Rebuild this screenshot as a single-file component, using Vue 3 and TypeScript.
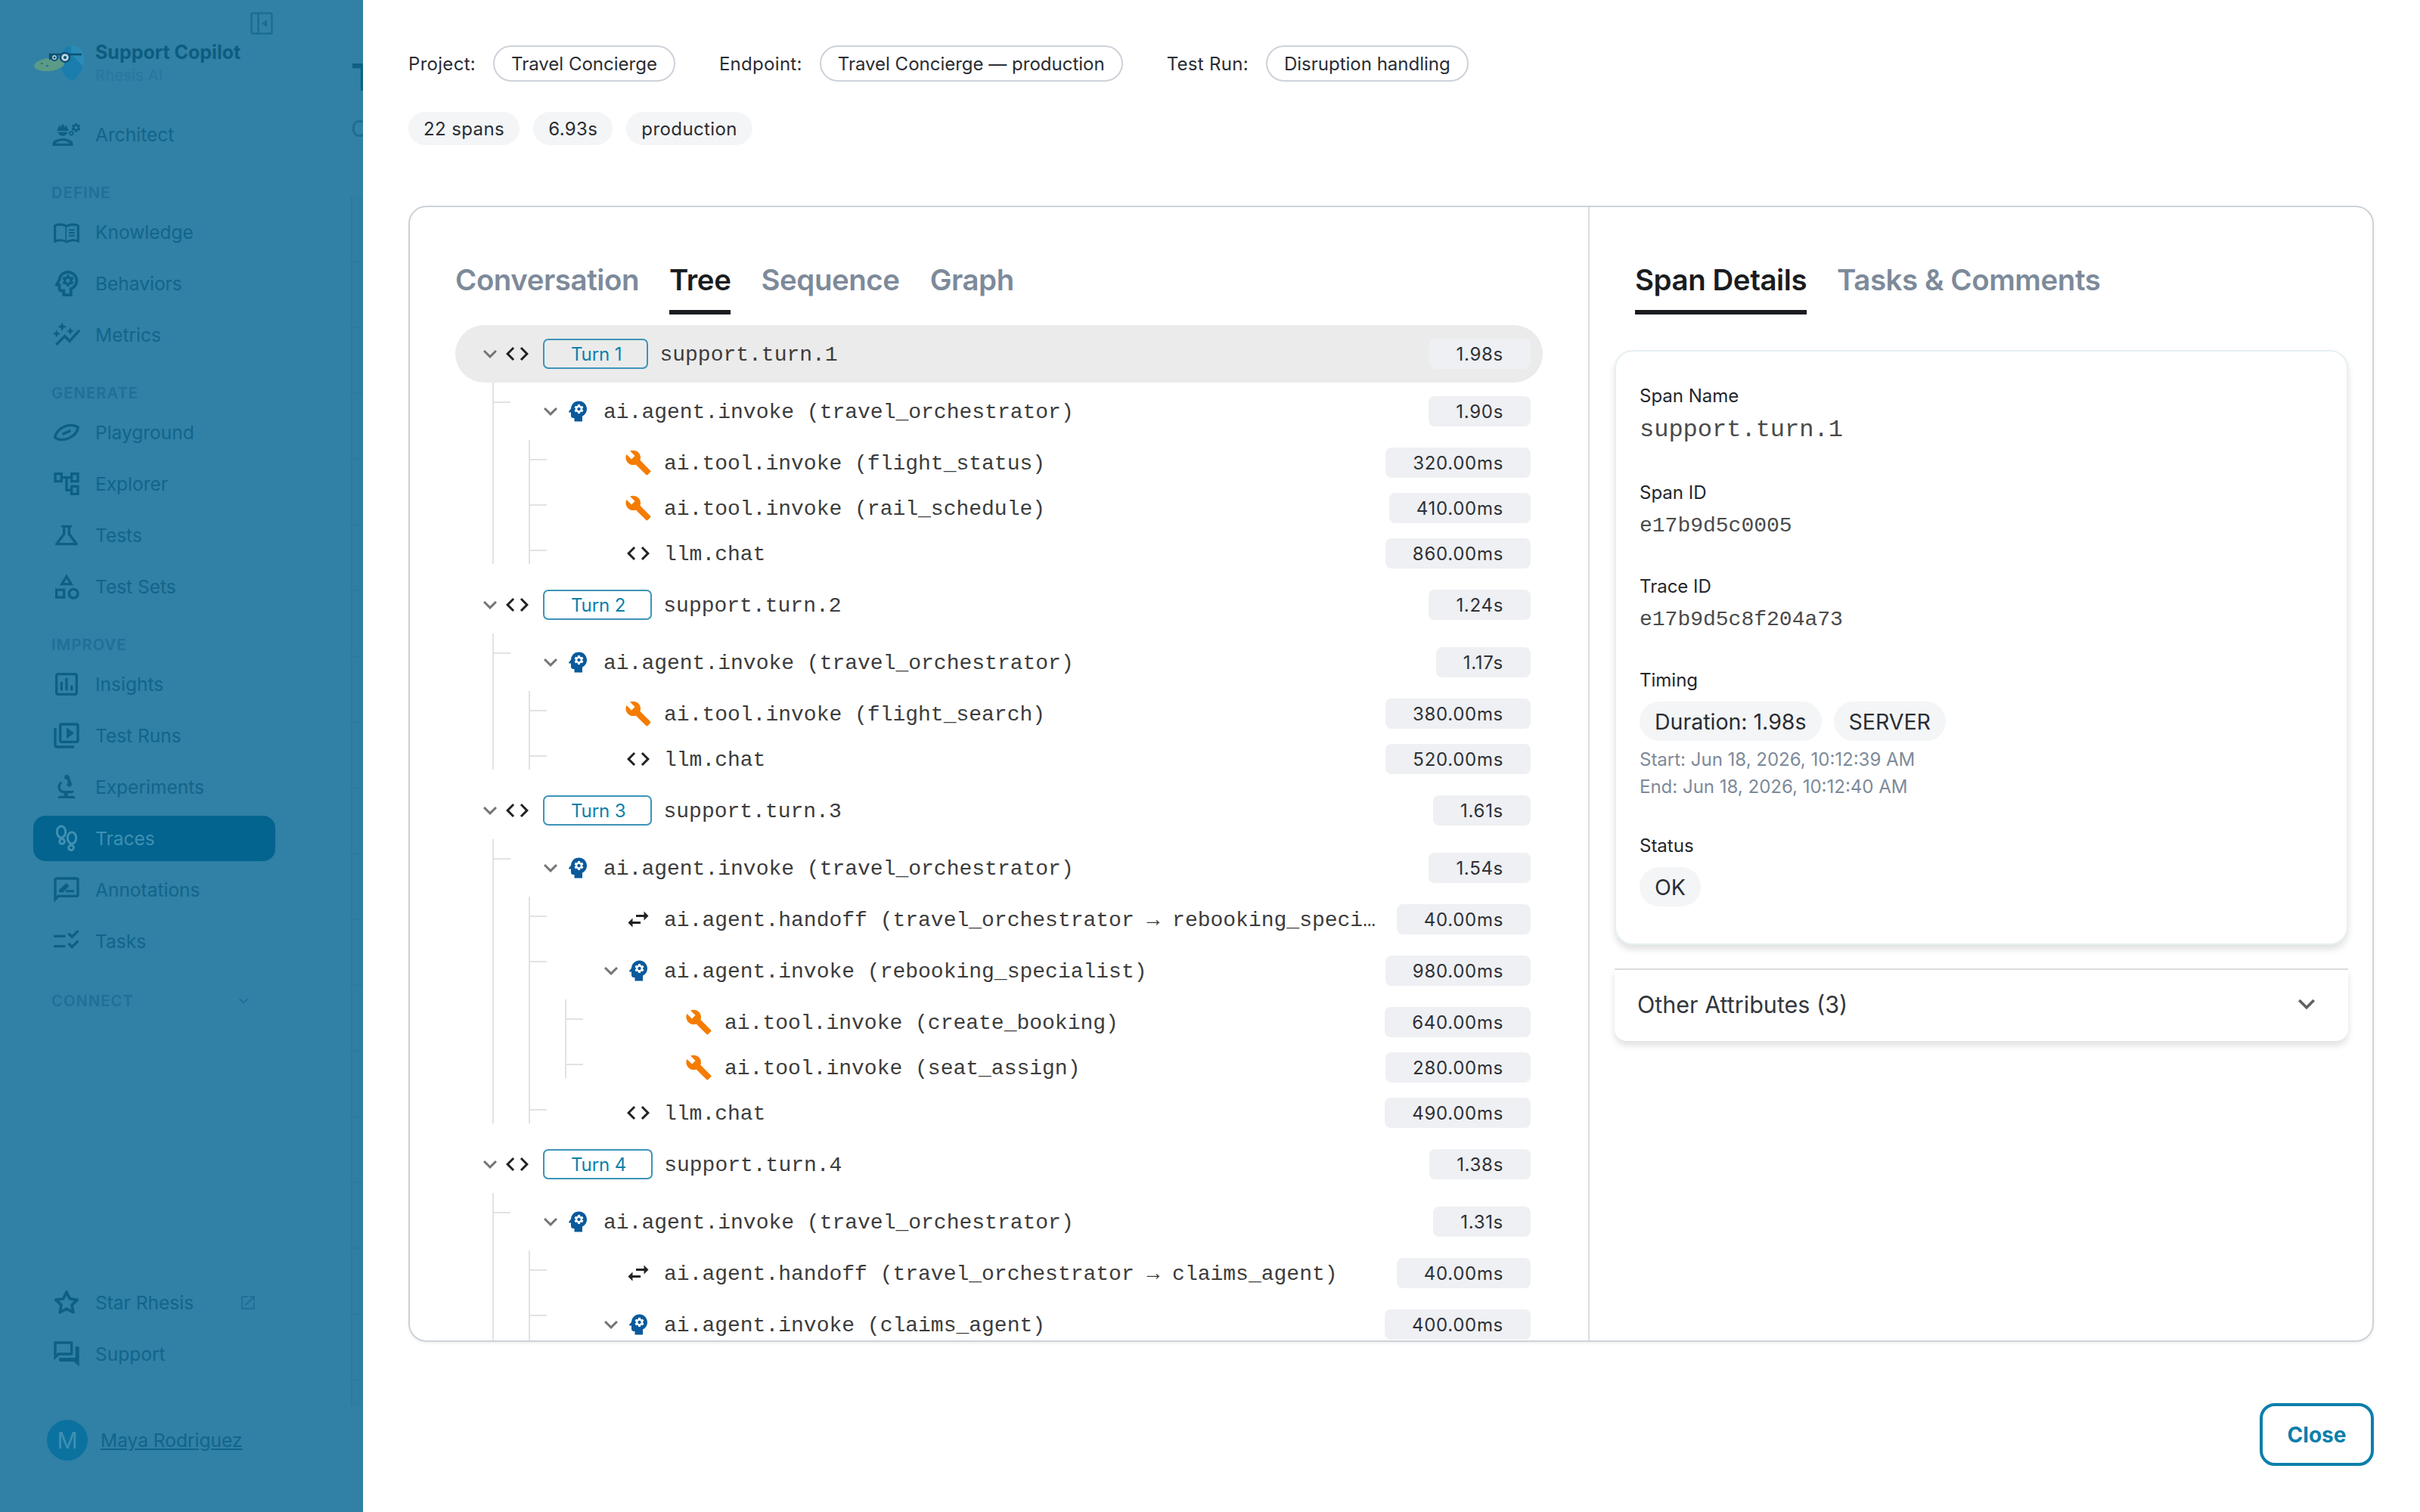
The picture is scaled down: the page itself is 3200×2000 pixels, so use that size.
<template>
  <div class="app">
    <aside class="sidebar">
      <button class="collapse">
        <svg viewBox="0 0 30 30" width="30" height="30" fill="none">
          <rect x="1.5" y="1.5" width="27" height="27" rx="2" stroke="currentColor" stroke-width="2.5" />
          <path d="M10.5 2v26" stroke="currentColor" stroke-width="2.5" />
          <path d="M22 10v10l-7-5z" fill="currentColor" />
        </svg>
      </button>

      <div class="brand">
        <svg class="logo" viewBox="0 0 70 50" width="70" height="50">
          <path d="M48 2C58 0 66 6 67 15C68 29 60 43 52 48C42 44 34 32 35 22C36 11 40 4 48 2Z" fill="#1a7dae" />
          <path d="M50 2C58 0 66 6 67 15C68 20 67 25 66 29L50 12Z" fill="#2a8bb4" />
          <ellipse cx="21" cy="26.5" rx="20" ry="8.5" transform="rotate(-6 21 26.5)" fill="#5b9a87" />
          <path d="M10 25h2.5M17 28h3" stroke="#155f7f" stroke-width="1.6" />
          <path d="M22 20v-7h42M22 13h19" stroke="#0d4f72" stroke-width="2.4" fill="none" />
          <circle cx="28" cy="17" r="4" fill="#bcd5df" stroke="#0d4f72" stroke-width="2.2" />
          <circle cx="42" cy="17" r="6" fill="#bcd5df" stroke="#0d4f72" stroke-width="2.4" />
          <circle cx="42" cy="17" r="2" fill="#0d4f72" />
          <circle cx="28" cy="17" r="1.6" fill="#0d4f72" />
        </svg>
        <div>
          <div class="brand-title">Support Copilot</div>
          <div class="brand-sub">Rhesis AI</div>
        </div>
      </div>

      <nav class="nav">
        <template v-for="entry in nav" :key="entry.label">
          <div v-if="entry.section" class="section">
            {{ entry.label }}
            <svg v-if="entry.label === 'CONNECT'" viewBox="0 0 24 24" width="24" height="24" fill="currentColor"><path d="M16.59 8.59 12 13.17 7.41 8.59 6 10l6 6 6-6z" /></svg>
          </div>
          <a v-else :class="['item', { active: entry.label === 'Traces' }]">
            <svg viewBox="0 0 24 24" width="40" height="40" fill="currentColor" v-html="icons[entry.icon!]"></svg>
            <span>{{ entry.label }}</span>
          </a>
        </template>
      </nav>

      <div class="bottom">
        <a class="item">
          <svg viewBox="0 0 24 24" width="40" height="40" fill="currentColor" v-html="icons.star"></svg>
          <span>Star Rhesis</span>
          <svg class="external" viewBox="0 0 24 24" width="24" height="24" fill="currentColor"><path d="M19 19H5V5h7V3H5c-1.11 0-2 .9-2 2v14c0 1.1.89 2 2 2h14c1.1 0 2-.9 2-2v-7h-2v7zM14 3v2h3.59l-9.83 9.83 1.41 1.41L19 6.41V10h2V3h-7z" /></svg>
        </a>
        <a class="item">
          <svg viewBox="0 0 24 24" width="40" height="40" fill="currentColor" v-html="icons.forum"></svg>
          <span>Support</span>
        </a>
        <div class="user">
          <span class="avatar">M</span>
          <span class="user-name">Maya Rodriguez</span>
        </div>
      </div>
    </aside>

    <div class="behind">
      <div class="behind-title">T</div>
      <div class="behind-sub">C</div>
      <div class="behind-card"></div>
    </div>

    <main class="modal">
      <div class="meta">
        <template v-for="m in meta" :key="m.label">
          <span class="meta-label">{{ m.label }}</span>
          <span class="meta-chip">{{ m.value }}</span>
        </template>
      </div>
      <div class="stats">
        <span v-for="s in stats" :key="s" class="stat">{{ s }}</span>
      </div>

      <section class="panel">
        <div class="left">
          <div class="tabs">
            <span v-for="t in leftTabs" :key="t" :class="['tab', { on: t === 'Tree' }]">{{ t }}</span>
          </div>
          <div class="tree">
            <div
              v-for="(row, i) in rows"
              :key="i"
              :class="['row', { parent: row.hasChildren, selected: i === 0 }]"
              :style="{ paddingLeft: 28 + row.depth * 80 + 'px' }"
            >
              <template v-for="g in row.guides" :key="g.level">
                <i class="guide" :class="{ short: g.short }" :style="{ left: 1 + g.level * 48 + 'px' }"></i>
              </template>
              <i v-if="row.depth > 0" class="stub" :style="{ left: 1 + row.depth * 48 + 'px' }"></i>

              <span class="twist">
                <svg v-if="row.hasChildren" viewBox="0 0 24 24" width="36" height="36" fill="#757575"><path d="M16.59 8.59 12 13.17 7.41 8.59 6 10l6 6 6-6z" /></svg>
              </span>
              <span class="kind" :class="row.kind">
                <svg viewBox="0 0 24 24" width="36" height="36" fill="currentColor" v-html="kindIcons[row.kind]"></svg>
              </span>
              <span v-if="row.turn" class="turn-badge">Turn {{ row.turn }}</span>
              <span class="label">{{ row.label }}</span>
              <span class="dur">{{ row.dur }}</span>
            </div>
          </div>
        </div>

        <div class="right">
          <div class="tabs right-tabs">
            <span class="tab on">Span Details</span>
            <span class="tab">Tasks &amp; Comments</span>
          </div>
          <div class="card">
            <div class="field">
              <div class="f-label">Span Name</div>
              <div class="f-name">support.turn.1</div>
            </div>
            <div class="field">
              <div class="f-label">Span ID</div>
              <div class="f-mono">e17b9d5c0005</div>
            </div>
            <div class="field">
              <div class="f-label">Trace ID</div>
              <div class="f-mono">e17b9d5c8f204a73</div>
            </div>
            <div class="field">
              <div class="f-label">Timing</div>
              <div class="chips">
                <span class="chip">Duration: 1.98s</span>
                <span class="chip">SERVER</span>
              </div>
              <div class="times">
                <div>Start: Jun 18, 2026, 10:12:39 AM</div>
                <div>End: Jun 18, 2026, 10:12:40 AM</div>
              </div>
            </div>
            <div class="field last">
              <div class="f-label">Status</div>
              <div class="chips"><span class="chip">OK</span></div>
            </div>
          </div>
          <div class="attrs">
            <span>Other Attributes (3)</span>
            <svg viewBox="0 0 24 24" width="44" height="44" fill="#616161"><path d="M16.59 8.59 12 13.17 7.41 8.59 6 10l6 6 6-6z" /></svg>
          </div>
        </div>
      </section>

      <footer class="foot">
        <button class="close">Close</button>
      </footer>
    </main>
  </div>
</template>

<script setup lang="ts">
type Kind = 'turn' | 'agent' | 'tool' | 'llm' | 'handoff'

interface SpanNode {
  label: string
  dur: string
  kind: Kind
  turn?: number
  children?: SpanNode[]
}

interface Guide {
  level: number
  short: boolean
}

interface Row extends SpanNode {
  depth: number
  hasChildren: boolean
  guides: Guide[]
}

interface NavEntry {
  label: string
  icon?: string
  section?: boolean
}

const codePath = 'M9.4 16.6 4.8 12l4.6-4.6L8 6l-6 6 6 6 1.4-1.4zm5.2 0 4.6-4.6-4.6-4.6L16 6l6 6-6 6-1.4-1.4z'

const kindIcons: Record<Kind, string> = {
  turn: `<path d="${codePath}"/>`,
  llm: `<path d="${codePath}"/>`,
  agent:
    '<path d="M13 3C9.25 3 6.2 5.94 6.02 9.64L4.1 12.2c-.25.33-.01.8.4.8H6v3c0 1.1.9 2 2 2h1v3h7v-4.68c2.36-1.12 4-3.53 4-6.32 0-3.87-3.13-7-7-7zm3 7c0 .13-.01.26-.02.39l.83.66c.08.06.1.16.05.25l-.8 1.39c-.05.09-.16.12-.24.09l-.99-.4c-.21.16-.43.29-.67.39L14 13.83c-.01.1-.1.17-.2.17h-1.6c-.1 0-.18-.07-.2-.17l-.15-1.06c-.25-.1-.47-.23-.68-.39l-.99.4c-.09.03-.2 0-.25-.09l-.8-1.39c-.05-.08-.03-.19.05-.25l.84-.66c-.01-.13-.02-.26-.02-.39s.02-.27.04-.39l-.85-.66c-.08-.06-.1-.16-.05-.26l.8-1.38c.05-.09.15-.12.24-.09l1 .4c.2-.15.43-.29.67-.39L12 6.17c.02-.1.1-.17.2-.17h1.6c.1 0 .18.07.2.17l.15 1.06c.24.1.46.23.67.39l1-.4c.09-.03.2 0 .24.09l.8 1.38c.05.09.03.2-.05.26l-.85.66c.03.12.04.25.04.39z"/><path d="M13 8.57c-.79 0-1.43.64-1.43 1.43s.64 1.43 1.43 1.43 1.43-.64 1.43-1.43-.64-1.43-1.43-1.43z"/>',
  tool:
    '<path d="M22.7 19l-9.1-9.1c.9-2.3.4-5-1.5-6.9-2-2-5-2.4-7.4-1.3L9 6 6 9 1.6 4.7C.4 7.1.9 10.1 2.9 12.1c1.9 1.9 4.6 2.4 6.9 1.5l9.1 9.1c.4.4 1 .4 1.4 0l2.3-2.3c.5-.4.5-1.1.1-1.4z"/>',
  handoff: '<path d="M6.99 11 3 15l3.99 4v-3H14v-2H6.99v-3zM21 9l-3.99-4v3H10v2h7.01v3L21 9z"/>'
}

const icons: Record<string, string> = {
  architect:
    '<path d="M9 15c-2.67 0-8 1.34-8 4v2h16v-2c0-2.66-5.33-4-8-4zm-5.5 4c.4-.9 3.3-2 5.5-2s5.1 1.1 5.5 2z"/><path d="M22.1 6.84c.01-.11.02-.22.02-.34s-.01-.23-.03-.34l.74-.58c.07-.05.08-.15.04-.22l-.7-1.21c-.04-.08-.14-.1-.21-.08l-.86.35c-.18-.14-.38-.25-.59-.34l-.13-.93c-.02-.09-.09-.15-.18-.15h-1.4c-.09 0-.16.06-.17.15l-.13.93c-.21.09-.41.21-.59.34l-.87-.35c-.08-.03-.17 0-.21.08l-.7 1.21c-.04.08-.03.17.04.22l.74.58c-.02.11-.03.23-.03.34s.01.23.03.34l-.74.58c-.07.05-.08.15-.04.22l.7 1.21c.04.08.14.1.21.08l.87-.35c.18.14.38.25.59.34l.13.93c.01.09.08.15.17.15h1.4c.09 0 .16-.06.17-.15l.13-.93c.21-.09.41-.21.59-.34l.87.35c.08.03.17 0 .21-.08l.7-1.21c.04-.08.03-.17-.04-.22zm-2.6.91c-.69 0-1.25-.56-1.25-1.25s.56-1.25 1.25-1.25 1.25.56 1.25 1.25-.56 1.25-1.25 1.25z"/><path d="M17.4 11.2c.01-.07.01-.14.01-.2s0-.13-.02-.2l.5-.38-.5-.86-.58.23c-.12-.09-.25-.17-.39-.23l-.09-.62h-1l-.09.62c-.14.06-.27.14-.39.23l-.58-.23-.5.86.5.38c-.01.07-.02.14-.02.2s.01.13.02.2l-.5.38.5.86.58-.23c.12.09.25.17.39.23l.09.62h1l.09-.62c.14-.06.27-.14.39-.23l.58.23.5-.86zm-1.6.6c-.44 0-.8-.36-.8-.8s.36-.8.8-.8.8.36.8.8-.36.8-.8.8z"/><path d="M4.74 9h8.53c.27 0 .49-.22.49-.49v-.02c0-.27-.22-.49-.49-.49H13c0-1.48-.81-2.75-2-3.45v.95c0 .28-.22.5-.5.5s-.5-.22-.5-.5V4.14C9.68 4.06 9.35 4 9 4s-.68.06-1 .14V5.5c0 .28-.22.5-.5.5S7 5.78 7 5.5v-.95C5.81 5.25 5 6.52 5 8h-.26c-.27 0-.49.22-.49.49v.03c0 .26.22.48.49.48zM9 13c1.86 0 3.41-1.28 3.86-3H5.14c.45 1.72 2 3 3.86 3z"/>',
  book:
    '<g transform="translate(12 12) scale(.92) translate(-12 -12)"><path d="M21 5c-1.11-.35-2.33-.5-3.5-.5-1.95 0-4.05.4-5.5 1.5-1.45-1.1-3.55-1.5-5.5-1.5S2.45 4.9 1 6v14.65c0 .25.25.5.5.5.1 0 .15-.05.25-.05C3.1 20.45 5.05 20 6.5 20c1.95 0 4.05.4 5.5 1.5 1.35-.85 3.8-1.5 5.5-1.5 1.65 0 3.35.3 4.75 1.05.1.05.15.05.25.05.25 0 .5-.25.5-.5V6c-.6-.45-1.25-.75-2-1zM3 18.5V7c1.1-.35 2.3-.5 3.5-.5 1.34 0 3.13.41 4.5 1v11.5c-1.37-.59-3.16-1-4.5-1-1.2 0-2.4.15-3.5.5zm18 0c-1.1-.35-2.3-.5-3.5-.5-1.7 0-4.15.65-5.5 1.5V8c1.35-.85 3.8-1.5 5.5-1.5 1.2 0 2.4.15 3.5.5z"/><path d="M14 9.5h5v1.3h-5zM14 12h5v1.3h-5zM14 14.5h5v1.3h-5z"/></g>',
  behavior:
    '<g transform="translate(12 12) scale(1.14) translate(-12 -12)"><path d="M15.82 7.22l-1 .4c-.21-.16-.43-.29-.67-.39L14 6.17c-.02-.1-.1-.17-.2-.17h-1.6c-.1 0-.18.07-.19.17l-.15 1.06c-.24.1-.47.23-.67.39l-1-.4c-.09-.03-.2 0-.24.09l-.8 1.38c-.05.09-.03.2.05.26l.85.66c-.03.12-.05.26-.05.39s.01.26.03.39l-.84.66c-.08.06-.1.17-.05.25l.8 1.39c.05.09.15.12.25.09l.99-.4c.21.16.43.29.68.39l.14 1.06c.02.1.1.17.2.17h1.6c.1 0 .18-.07.2-.17l.15-1.06c.24-.1.47-.23.67-.39l.99.4c.09.04.2 0 .24-.09l.8-1.39c.05-.09.03-.19-.05-.25l-.83-.66c.02-.13.02-.26.02-.39 0-.14-.01-.27-.03-.39l.85-.66c.08-.06.1-.17.05-.26l-.8-1.38c-.05-.09-.16-.12-.25-.09zM13 11.43c-.79 0-1.43-.64-1.43-1.43s.64-1.43 1.43-1.43 1.43.64 1.43 1.43-.64 1.43-1.43 1.43z"/><path d="M19.94 9.06c-.43-3.27-3.23-5.86-6.53-6.05C13.27 3 13.14 3 13 3 9.47 3 6.57 5.61 6.08 9l-1.93 3.48c-.41.66.07 1.52.85 1.52h1v2c0 1.1.9 2 2 2h1v3h7v-4.68c2.62-1.25 4.35-4.08 3.94-7.26zM14.89 14.63 14 15.05V19h-3v-3H8v-4H6.7l1.33-2.33C8.21 7.06 10.35 5 13 5c2.76 0 5 2.24 5 5 0 2.09-1.29 3.88-3.11 4.63z"/></g>',
  metrics:
    '<path d="M14.06 9.94 12 9l2.06-.94L15 6l.94 2.06L18 9l-2.06.94L15 12l-.94-2.06zM4 14l.94-2.06L7 11l-2.06-.94L4 8l-.94 2.06L1 11l2.06.94L4 14zm4.5-5 1.09-2.41L12 5.5 9.59 4.41 8.5 2 7.41 4.41 5 5.5l2.41 1.09L8.5 9zm-4 11.5 6-6.01 4 4L23 8.93l-1.41-1.41-7.09 7.97-4-4L3 19l1.5 1.5z"/>',
  football:
    '<g transform="rotate(-24 12 12)" fill="none" stroke="currentColor" stroke-width="2"><path d="M2 12C6 5.5 18 5.5 22 12C18 18.5 6 18.5 2 12Z"/><path d="M8.5 12h7"/></g>',
  tree: '<path d="M22 11V3h-7v3H9V3H2v8h7V8h2v10h4v3h7v-8h-7v3h-2V8h2v3h7zM7 9H4V5h3v4zm10 6h3v4h-3v-4zm0-10h3v4h-3V5z"/>',
  flask:
    '<path d="M13 11.33 18 18H6l5-6.67V6h2m2.96-2H8.04c-.42 0-.65.48-.39.81L9 6.5v4.17L3.2 18.4c-.49.66-.02 1.6.8 1.6h16c.82 0 1.29-.94.8-1.6L15 10.67V6.5l1.35-1.69c.26-.33.03-.81-.39-.81z"/>',
  category:
    '<path d="M12 2l-5.5 9h11L12 2zm0 3.84L13.93 9h-3.87L12 5.84zM17.5 13c-2.49 0-4.5 2.01-4.5 4.5s2.01 4.5 4.5 4.5 4.5-2.01 4.5-4.5-2.01-4.5-4.5-4.5zm0 7c-1.38 0-2.5-1.12-2.5-2.5s1.12-2.5 2.5-2.5 2.5 1.12 2.5 2.5-1.12 2.5-2.5 2.5zM3 21.5h8v-8H3v8zm2-6h4v4H5v-4z"/>',
  chart:
    '<path d="M19 3H5c-1.1 0-2 .9-2 2v14c0 1.1.9 2 2 2h14c1.1 0 2-.9 2-2V5c0-1.1-.9-2-2-2zm0 16H5V5h14v14zM7 10h2v7H7zm4-3h2v10h-2zm4 6h2v4h-2z"/>',
  play:
    '<path d="M4 6H2v14c0 1.1.9 2 2 2h14v-2H4V6zm16-4H8c-1.1 0-2 .9-2 2v12c0 1.1.9 2 2 2h12c1.1 0 2-.9 2-2V4c0-1.1-.9-2-2-2zm0 14H8V4h12v12zM12 5.5v9l6-4.5z"/>',
  biotech:
    '<path d="M7 19c-1.1 0-2 .9-2 2h14c0-1.1-.9-2-2-2h-4v-2h3c1.1 0 2-.9 2-2h-8c-1.66 0-3-1.34-3-3 0-1.09.59-2.04 1.46-2.56C8.17 9.03 8 8.54 8 8c0-.21.04-.42.09-.62C6.28 8.13 5 9.92 5 12c0 2.76 2.24 5 5 5v2H7z"/><path d="M10.56 5.51C11.91 5.54 13 6.64 13 8c0 .75-.33 1.41-.85 1.87l.59 1.62.94-.34.34.94 1.88-.68-.34-.94.94-.34-2.74-7.52-.94.34-.34-.94-1.88.68.34.94-.94.35.56 1.53z"/>',
  steps:
    '<g fill="none" stroke="currentColor" stroke-width="1.8"><ellipse cx="7.8" cy="6.8" rx="3.4" ry="4.6"/><circle cx="8.4" cy="14.4" r="2"/><ellipse cx="16.2" cy="11.6" rx="3.4" ry="4.6"/><circle cx="15.6" cy="19.4" r="2"/></g>',
  note:
    '<path d="M20 2H4c-1.1 0-2 .9-2 2v18l4-4h14c1.1 0 2-.9 2-2V4c0-1.1-.9-2-2-2zm0 14H5.17L4 17.17V4h16v12z"/><path d="M6 14h3.2l4.8-5-2.2-2.2L6 12zM11.5 14H18v-1.8h-6.5z"/>',
  tasks:
    '<path d="M11 7H2v2h9V7zm0 8H2v2h9v-2zm5.34 3L12.8 14.46l1.41-1.41 2.12 2.12 4.24-4.24 1.41 1.41L16.34 18zm0-8L12.8 6.46l1.41-1.41 2.12 2.12 4.24-4.24 1.41 1.41L16.34 10z"/>',
  star:
    '<path d="M12 3.6 14.6 9l5.9.8-4.3 4.1 1.1 5.9-5.3-2.9-5.3 2.9 1.1-5.9-4.3-4.1 5.9-.8z" fill="none" stroke="currentColor" stroke-width="2.2" stroke-linejoin="round"/>',
  forum:
    '<path d="M15 4v7H5.17L4 12.17V4h11m1-2H3c-.55 0-1 .45-1 1v14l4-4h10c.55 0 1-.45 1-1V3c0-.55-.45-1-1-1zm5 4h-2v9H6v2c0 .55.45 1 1 1h11l4 4V7c0-.55-.45-1-1-1z"/>'
}

const nav: NavEntry[] = [
  { label: 'Architect', icon: 'architect' },
  { label: 'DEFINE', section: true },
  { label: 'Knowledge', icon: 'book' },
  { label: 'Behaviors', icon: 'behavior' },
  { label: 'Metrics', icon: 'metrics' },
  { label: 'GENERATE', section: true },
  { label: 'Playground', icon: 'football' },
  { label: 'Explorer', icon: 'tree' },
  { label: 'Tests', icon: 'flask' },
  { label: 'Test Sets', icon: 'category' },
  { label: 'IMPROVE', section: true },
  { label: 'Insights', icon: 'chart' },
  { label: 'Test Runs', icon: 'play' },
  { label: 'Experiments', icon: 'biotech' },
  { label: 'Traces', icon: 'steps' },
  { label: 'Annotations', icon: 'note' },
  { label: 'Tasks', icon: 'tasks' },
  { label: 'CONNECT', section: true }
]

const meta = [
  { label: 'Project:', value: 'Travel Concierge' },
  { label: 'Endpoint:', value: 'Travel Concierge — production' },
  { label: 'Test Run:', value: 'Disruption handling' }
]
const stats = ['22 spans', '6.93s', 'production']
const leftTabs = ['Conversation', 'Tree', 'Sequence', 'Graph']

const tool = (name: string, dur: string): SpanNode => ({ label: `ai.tool.invoke (${name})`, dur, kind: 'tool' })
const llm = (dur: string): SpanNode => ({ label: 'llm.chat', dur, kind: 'llm' })
const agent = (name: string, dur: string, children: SpanNode[]): SpanNode => ({
  label: `ai.agent.invoke (${name})`,
  dur,
  kind: 'agent',
  children
})
const handoff = (to: string, dur: string): SpanNode => ({
  label: `ai.agent.handoff (travel_orchestrator → ${to})`,
  dur,
  kind: 'handoff'
})
const turn = (n: number, dur: string, children: SpanNode[]): SpanNode => ({
  label: `support.turn.${n}`,
  dur,
  kind: 'turn',
  turn: n,
  children
})

const spans: SpanNode[] = [
  turn(1, '1.98s', [
    agent('travel_orchestrator', '1.90s', [
      tool('flight_status', '320.00ms'),
      tool('rail_schedule', '410.00ms'),
      llm('860.00ms')
    ])
  ]),
  turn(2, '1.24s', [
    agent('travel_orchestrator', '1.17s', [tool('flight_search', '380.00ms'), llm('520.00ms')])
  ]),
  turn(3, '1.61s', [
    agent('travel_orchestrator', '1.54s', [
      handoff('rebooking_specialist', '40.00ms'),
      agent('rebooking_specialist', '980.00ms', [
        tool('create_booking', '640.00ms'),
        tool('seat_assign', '280.00ms')
      ]),
      llm('490.00ms')
    ])
  ]),
  turn(4, '1.38s', [
    agent('travel_orchestrator', '1.31s', [
      handoff('claims_agent', '40.00ms'),
      agent('claims_agent', '400.00ms', [])
    ])
  ])
]

// 把树拍平成行，竖线按层级画在每一行里
const flatten = (nodes: SpanNode[], depth: number, chain: boolean[]): Row[] =>
  nodes.flatMap((node, i) => {
    const path = [...chain, i === nodes.length - 1]
    const kids = node.children ?? []
    const guides: Guide[] = []
    for (let level = 1; level <= depth; level++) {
      guides.push({ level, short: kids.length === 0 && path.slice(level).every(Boolean) })
    }
    const row: Row = { ...node, depth, hasChildren: !!node.children, guides }
    return [row, ...flatten(kids, depth + 1, path)]
  })

const rows = flatten(spans, 0, [])
</script>

<style>
html,
body {
  margin: 0;
  background: #fff;
}
</style>

<style scoped>
.app {
  width: 3200px;
  height: 2000px;
  display: flex;
  overflow: hidden;
  font-family: Inter, "Noto Sans", sans-serif;
  background: #3180a5;
  color: #2a2d33;
}

/* sidebar */
.sidebar {
  width: 464px;
  height: 2000px;
  box-sizing: border-box;
  flex: none;
  padding: 16px 100px 68px 44px;
  display: flex;
  flex-direction: column;
  color: #0f6083;
}

.collapse {
  align-self: flex-end;
  margin-right: 3px;
  padding: 0;
  width: 30px;
  height: 30px;
  border: 0;
  background: none;
  color: #1b6d92;
}

.brand {
  display: flex;
  align-items: center;
  margin-top: 7px;
  height: 62px;
}

.logo {
  flex: none;
  margin-right: 12px;
}

.brand-title {
  font-size: 25px;
  font-weight: 700;
  line-height: 32px;
  color: #0c5c80;
  white-space: nowrap;
}

.brand-sub {
  font-size: 20.5px;
  line-height: 30px;
  color: #2877a0;
}

.nav {
  margin-top: 33px;
}

.section {
  display: flex;
  justify-content: space-between;
  align-items: center;
  height: 36px;
  margin: 29px 0 4px;
  padding: 0 30px 0 24px;
  font-size: 20px;
  font-weight: 600;
  letter-spacing: 1.2px;
  color: #1f7099;
}

.section:last-child {
  margin-top: 31px;
}

.item {
  display: flex;
  align-items: center;
  gap: 18px;
  height: 60px;
  margin-bottom: 8px;
  padding-left: 24px;
  border-radius: 16px;
  font-size: 24.5px;
  color: #11658a;
}

.item svg {
  flex: none;
  color: #0e5f84;
}

.item.active {
  background: #02648f;
  color: #3f90b2;
}

.item.active svg {
  color: #3f90b2;
}

.item .external {
  margin-left: auto;
  margin-right: 24px;
  color: #1f6f98;
}

.bottom {
  margin-top: auto;
}

.user {
  display: flex;
  align-items: center;
  gap: 17px;
  margin: 57px 0 0 18px;
}

.avatar {
  width: 54px;
  height: 54px;
  border-radius: 50%;
  background: #0b72a0;
  color: #3f90b2;
  display: flex;
  align-items: center;
  justify-content: center;
  font-size: 30px;
}

.user-name {
  font-size: 24.5px;
  text-decoration: underline;
  color: #11658a;
}

/* what's left of the page under the drawer */
.behind {
  width: 16px;
  height: 2000px;
  flex: none;
  overflow: hidden;
  color: #0f6083;
}

.behind-title {
  margin-top: 74px;
  font-size: 50px;
  line-height: 56px;
  font-weight: 700;
}

.behind-sub {
  margin-top: 20px;
  font-size: 30px;
  line-height: 40px;
  color: #1b6d92;
}

.behind-card {
  margin-top: 70px;
  height: 1600px;
  border-left: 2px solid #2d7a9e;
  background: repeating-linear-gradient(#2f7ea3 0 85px, #2d7a9e 85px 87px);
}

/* modal */
.modal {
  flex: 1;
  min-width: 0;
  background: #fff;
  box-sizing: border-box;
  padding: 60px 61px 0 60px;
  display: flex;
  flex-direction: column;
}

.meta {
  display: flex;
  align-items: center;
  height: 48px;
  font-size: 24px;
}

.meta-label {
  margin-right: 23px;
  letter-spacing: 0.3px;
}

.meta-chip {
  height: 48px;
  box-sizing: border-box;
  display: flex;
  align-items: center;
  padding: 0 22px;
  border: 2px solid #cdd2d9;
  border-radius: 24px;
  margin-right: 58px;
}

.stats {
  display: flex;
  gap: 18px;
  margin-top: 40px;
}

.stat {
  height: 44px;
  display: flex;
  align-items: center;
  padding: 0 20px;
  border-radius: 22px;
  background: #f3f5f6;
  font-size: 24px;
  letter-spacing: 0.4px;
}

.panel {
  flex: 1;
  min-height: 0;
  margin-top: 80px;
  display: flex;
  border: 2px solid #cdd2d9;
  border-radius: 24px;
  overflow: hidden;
  box-shadow: 0 2px 4px rgba(0, 0, 0, 0.06);
}

.left {
  width: 1560px;
  flex: none;
  box-sizing: border-box;
  padding: 60px 60px 0;
  border-right: 2px solid #dcdcdc;
  overflow: hidden;
}

.tabs {
  display: flex;
  gap: 40px;
  height: 82px;
}

.tab {
  box-sizing: border-box;
  height: 82px;
  line-height: 72px;
  font-size: 38.4px;
  font-weight: 600;
  letter-spacing: -0.4px;
  color: #7d8a9a;
  white-space: nowrap;
}

.tab.on {
  color: #1a1c20;
  border-bottom: 6px solid #1a1c20;
}

.tree {
  margin-top: 14px;
}

.row {
  position: relative;
  display: flex;
  align-items: center;
  height: 60px;
  box-sizing: border-box;
}

.row.parent {
  height: 76px;
}

.row.selected {
  background: #ebebeb;
  border-radius: 38px;
}

.guide {
  position: absolute;
  top: 0;
  bottom: 0;
  width: 2px;
  background: #e2e2e2;
}

.guide.short {
  bottom: 16px;
}

.stub {
  position: absolute;
  top: 25px;
  width: 24px;
  height: 2px;
  background: #e2e2e2;
}

.twist,
.kind {
  width: 36px;
  height: 36px;
  flex: none;
}

.twist svg,
.kind svg {
  display: block;
}

.kind {
  margin-right: 16px;
  color: #222;
}

.kind.agent {
  color: #0a5a9c;
}

.kind.tool {
  color: #f57c00;
}

.turn-badge {
  flex: none;
  height: 40px;
  box-sizing: border-box;
  display: flex;
  align-items: center;
  padding: 0 33px 0 35px;
  margin-right: 15px;
  border: 2px solid #3d94b8;
  border-radius: 7px;
  font-size: 24px;
  letter-spacing: -0.1px;
  color: #0b7fab;
}

.label {
  flex: 1;
  min-width: 0;
  font-family: "Liberation Mono", monospace;
  font-size: 28px;
  color: #3c3c3c;
  white-space: nowrap;
  overflow: hidden;
  text-overflow: ellipsis;
  padding: 3px 27px 0 0;
}

.dur {
  flex: none;
  height: 40px;
  display: flex;
  align-items: center;
  padding: 0 36px;
  margin-right: 16px;
  border-radius: 8px;
  background: #eef0f3;
  font-size: 24px;
  letter-spacing: 0.7px;
  color: #2f3136;
}

.right {
  flex: 1;
  min-width: 0;
  box-sizing: border-box;
  padding: 60px 32px 0 33px;
}

.right-tabs {
  margin-left: 27px;
}

.card {
  margin-top: 47px;
  box-sizing: border-box;
  padding: 41px 31px 49px;
  background: #fff;
  border: 2px solid #e6f0f3;
  border-radius: 24px;
  box-shadow: 0 6px 10px rgba(0, 0, 0, 0.12);
}

.field {
  margin-bottom: 42px;
}

.field.last {
  margin-bottom: 0;
}

.f-label {
  font-size: 24px;
  line-height: 36px;
  color: #24262b;
}

.f-name {
  margin-top: 4px;
  font-family: "Liberation Mono", monospace;
  font-size: 32px;
  line-height: 46px;
  color: #4a4a4a;
}

.f-mono {
  margin-top: 6px;
  font-family: "Liberation Mono", monospace;
  font-size: 28px;
  line-height: 40px;
  color: #4a4a4a;
}

.chips {
  display: flex;
  gap: 16px;
  margin-top: 10px;
}

.chip {
  height: 52px;
  display: flex;
  align-items: center;
  padding: 0 20px;
  border-radius: 26px;
  background: #f3f5f6;
  font-size: 28.5px;
}

.times {
  margin-top: 7px;
  font-size: 24px;
  line-height: 36px;
  color: #7d8a9a;
}

.attrs {
  margin-top: 31px;
  height: 96px;
  box-sizing: border-box;
  padding: 0 33px 4px 30px;
  display: flex;
  align-items: center;
  justify-content: space-between;
  border-top: 2px solid #dcdcdc;
  border-radius: 0 0 16px 16px;
  box-shadow: 0 6px 10px rgba(0, 0, 0, 0.12);
  font-size: 30.5px;
  color: #34373c;
}

.foot {
  display: flex;
  justify-content: flex-end;
  padding: 81px 0 61px;
}

.close {
  width: 151px;
  height: 83px;
  box-sizing: border-box;
  border: 4px solid #0b7fab;
  border-radius: 20px;
  background: #fff;
  font-family: Inter, sans-serif;
  font-size: 28px;
  font-weight: 700;
  color: #0b7fab;
}
</style>
